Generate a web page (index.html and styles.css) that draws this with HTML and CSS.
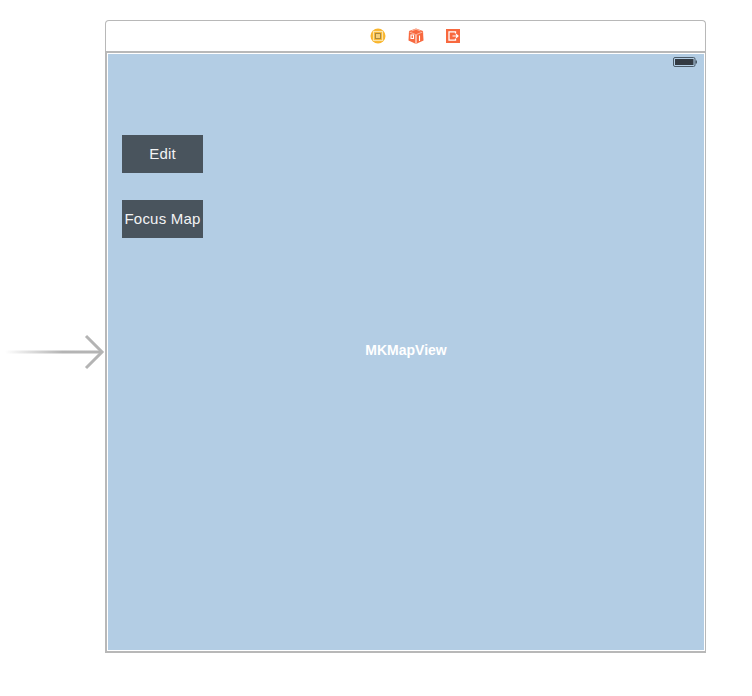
FILE: index.html
```html
<!DOCTYPE html>
<html lang="en">
<head>
<meta charset="utf-8">
<title>Storyboard scene</title>
<link rel="stylesheet" href="styles.css">
</head>
<body>
<div class="canvas">
  <div class="toolbar">
    <svg class="icon" width="16" height="16" viewBox="0 0 16 16">
      <circle cx="8" cy="8" r="7.500" fill="#f9b52c"/>
      <rect x="3.500" y="3.500" width="9" height="9" fill="none" stroke="#fbe3a8" stroke-width="1.200"/>
      <rect x="5.500" y="5.500" width="5" height="5" fill="#f6cf77" stroke="#a9893f" stroke-width="1"/>
    </svg>
    <svg class="icon" width="16" height="16" viewBox="0 0 16 16">
      <path d="M8 .5 15 3 15.500 12.500 9 15.500 7 15.500 .5 12.500 1 3Z" fill="#f8693f"/>
      <path d="M1.500 4 7.500 6.500 7.500 15M14.500 4 8.500 6.500 8.500 15M3.500 3 8 1.200 12.500 3" fill="none" stroke="#fcc9b8" stroke-width=".8"/>
      <path d="M3 7h2.500v3.500h-2.500zM11.500 7.500v5.500" fill="none" stroke="#fff" stroke-width="1.100"/>
    </svg>
    <svg class="icon" width="14" height="14" viewBox="0 0 14 14">
      <rect width="14" height="14" fill="#f8693f"/>
      <path d="M9.500 4.500V2.800H3v8.400h6.500V9.500" fill="none" stroke="#fff" stroke-width="1.300"/>
      <path d="M6.500 7h5.500M10 5.200l2 1.800-2 1.800" fill="none" stroke="#fff" stroke-width="1.200"/>
    </svg>
  </div>
  <svg class="entry-arrow" width="105" height="36" viewBox="0 0 105 36">
    <defs>
      <linearGradient id="fade" x1="0" y1="0" x2="1" y2="0">
        <stop offset="0" stop-color="#b4b4b4" stop-opacity="0"/>
        <stop offset=".6" stop-color="#b4b4b4"/>
      </linearGradient>
    </defs>
    <rect x="5" y="16.500" width="96" height="3" fill="url(#fade)"/>
    <path d="M86 2 102 18 86 34" fill="none" stroke="#b4b4b4" stroke-width="3"/>
  </svg>
  <div class="scene">
    <div class="map">
      <svg class="battery" width="24" height="10" viewBox="0 0 24 10">
        <rect x=".5" y=".5" width="21.500" height="9" rx="1.500" fill="none" stroke="#4a5a68"/>
        <rect x="2" y="2" width="18.500" height="6" fill="#333a42"/>
        <rect x="22.500" y="3.500" width="1.500" height="3" fill="#4a5a68"/>
      </svg>
      <span class="map-label">MKMapView</span>
      <div class="actions">
        <div class="action">Edit</div>
        <div class="action">Focus Map</div>
      </div>
    </div>
  </div>
</div>
</body>
</html>
```

FILE: styles.css
```css
html, body {
  margin: 0;
  background: #fff;
}

.canvas {
  display: grid;
  grid-template-columns: 105px 601px;
  grid-template-rows: 31px 602px;
  padding-top: 20px;
  font-family: "Liberation Sans", Arial, sans-serif;
}

.toolbar {
  grid-column: 2;
  grid-row: 1;
  box-sizing: border-box;
  border: 1px solid #b8b8b8;
  border-bottom: 0;
  border-radius: 4px 4px 0 0;
  display: flex;
  align-items: center;
  justify-content: center;
  gap: 22px;
  padding: 0 0 0 18px;
}

.icon {
  display: block;
}

.entry-arrow {
  grid-column: 1;
  grid-row: 2;
  align-self: center;
  display: block;
}

.scene {
  grid-column: 2;
  grid-row: 2;
  box-sizing: border-box;
  border: 2px solid #b8b8b8;
  border-right-width: 1.500px;
  padding: 1px;
  display: flex;
  background: #fff;
}

.map {
  flex: 1;
  position: relative;
  background: #b3cde4;
  padding: 81px 0 0 14px;
}

.battery {
  position: absolute;
  top: 3px;
  right: 7px;
}

.map-label {
  position: absolute;
  top: 288px;
  left: 0;
  right: 0;
  text-align: center;
  font-size: 14px;
  line-height: 16px;
  font-weight: 700;
  color: #fff;
}

.actions {
  display: flex;
  flex-direction: column;
  gap: 27px;
}

.action {
  width: 81px;
  height: 38px;
  background: #49545d;
  color: #f2f3f4;
  font-size: 15px;
  line-height: 37px;
  text-align: center;
  white-space: nowrap;
  letter-spacing: .2px;
}
```
